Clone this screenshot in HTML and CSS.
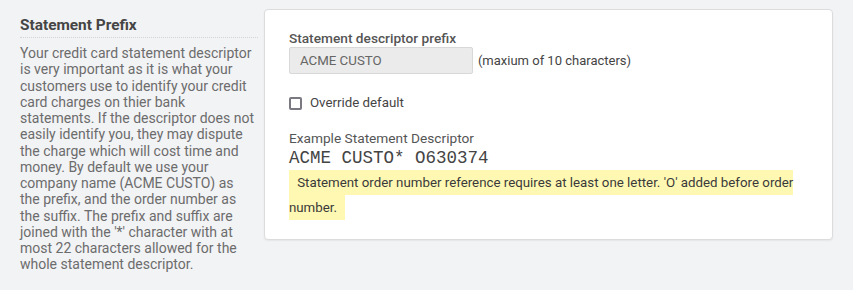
FILE: index.html
```html
<!DOCTYPE html>
<html>
<head>
<meta charset="utf-8">
<link rel="stylesheet" href="styles.css">
</head>
<body>
<div class="page">
  <div class="layout">
    <aside class="intro">
      <h2 class="intro-title">Statement Prefix</h2>
      <p class="intro-text">Your credit card statement descriptor is very important as it is what your customers use to identify your credit card charges on thier bank statements. If the descriptor does not easily identify you, they may dispute the charge which will cost time and money. By default we use your company name (ACME CUSTO) as the prefix, and the order number as the suffix. The prefix and suffix are joined with the '*' character with at most 22 characters allowed for the whole statement descriptor.</p>
    </aside>
    <section class="card">
      <label class="field-label">Statement descriptor prefix</label>
      <div class="field-row">
        <div class="input">ACME CUSTO</div>
        <span class="hint">(maxium of 10 characters)</span>
      </div>
      <label class="check">
        <span class="check-box"></span>
        <span class="check-text">Override default</span>
      </label>
      <div class="example">
        <div class="field-label">Example Statement Descriptor</div>
        <div class="mono">ACME CUSTO* O630374</div>
        <div class="notice"><span class="notice-text">&nbsp;Statement order number reference requires at least one letter. 'O' added before order number.</span></div>
      </div>
    </section>
  </div>
</div>
</body>
</html>
```
FILE: styles.css
```css
html, body {
  margin: 0;
  padding: 0;
  background: #ffffff;
}
body {
  font-family: Roboto, "Liberation Sans", sans-serif;
}
.page {
  width: 853px;
  height: 290px;
  background: #f2f3f5;
  box-sizing: border-box;
  padding: 9px 20px 0 20px;
}
.layout {
  display: grid;
  grid-template-columns: 30% 70%;
  align-items: start;
}
.intro {
  padding-right: 6px;
  padding-top: 7px;
}
.intro-title {
  margin: 0;
  font-size: 15.4px;
  font-weight: 700;
  color: #454545;
  line-height: 18px;
  padding-bottom: 3px;
  border-bottom: 1px dotted #d4d4d4;
}
.intro-text {
  margin: 7px 0 0 0;
  font-size: 14px;
  line-height: 16.25px;
  color: #6c6c6c;
  padding-right: 2px;
}
.card {
  background: #ffffff;
  border: 1px solid #dcdcdc;
  border-radius: 4px;
  box-shadow: 0 1px 2px rgba(0,0,0,0.06);
  padding: 20px 24px 19px 24px;
}
.field-label {
  display: block;
  font-size: 13.7px;
  font-weight: 500;
  color: #555555;
  line-height: 16px;
}
.field-row {
  display: flex;
  align-items: center;
  margin-top: 1px;
}
.input {
  width: 184px;
  height: 27px;
  box-sizing: border-box;
  background: #ebebeb;
  border: 1px solid #d8d8d8;
  border-radius: 2px;
  font-size: 13.3px;
  color: #666666;
  padding: 0 10px;
  display: flex;
  align-items: center;
}
.hint {
  margin-left: 5px;
  font-size: 13px;
  color: #444444;
}
.check {
  display: flex;
  align-items: center;
  margin-top: 21px;
}
.check-box {
  width: 13px;
  height: 13px;
  box-sizing: border-box;
  border: 2px solid #7a7880;
  border-radius: 2px;
}
.check-text {
  margin-left: 8px;
  font-size: 13.3px;
  color: #444444;
  line-height: 16px;
}
.example {
  margin-top: 19px;
}
.example .field-label {
  font-weight: 400;
  color: #555555;
}
.mono {
  font-family: "Liberation Mono", "Courier New", monospace;
  font-size: 17.5px;
  color: #444444;
  line-height: 22px;
  margin-top: 1px;
}
.notice {
  font-size: 13.3px;
  line-height: 25px;
  color: #3a3a3a;
  margin-top: 1px;
}
.notice-text {
  background: #fff8b3;
  padding: 5px 8px 5px 5px;
}
```
